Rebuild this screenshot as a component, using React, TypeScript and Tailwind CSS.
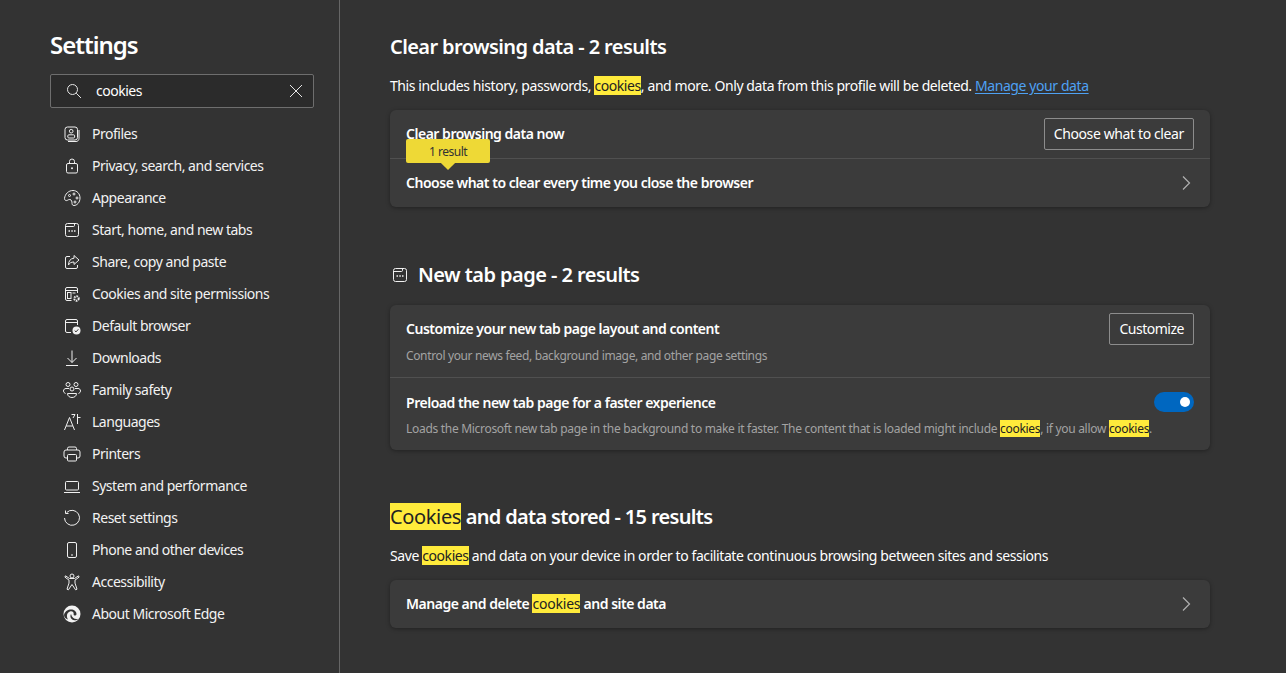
import React from "react";

const ic = { width: 20, height: 20, viewBox: "0 0 20 20", fill: "none", stroke: "#f0f0f0", strokeWidth: 1 } as const;

const TabIcon = () => (
  <svg {...ic}>
    <rect x="3.500" y="3.500" width="13" height="13" rx="2" />
    <path d="M3.500 6.500h8c.6 0 1-.4 1-1v-2" />
    <path d="M6.500 11h1.500M9.300 11h1.500M12 11h1.500" strokeWidth="1.500" />
  </svg>
);

const navItems: { label: string; icon: React.ReactNode }[] = [
  {
    label: "Profiles",
    icon: (
      <svg {...ic}>
        <rect x="3" y="3" width="12.500" height="13" rx="2.500" />
        <circle cx="9.200" cy="7.200" r="1.800" />
        <path d="M5.800 13v-1.200c0-.6.5-1 1-1h4.800c.6 0 1 .4 1 1V13c0 .5-.4 1-1 1H6.800c-.5 0-1-.5-1-1z" />
        <path d="M17 6v8.500c0 1.600-1.200 3-3 3H6" />
      </svg>
    ),
  },
  {
    label: "Privacy, search, and services",
    icon: (
      <svg {...ic}>
        <rect x="4.500" y="7.500" width="11" height="9.500" rx="1.500" />
        <path d="M7.500 7.500V5.500a2.500 2.500 0 0 1 5 0v2" />
        <circle cx="10" cy="12.200" r="1" fill="#f0f0f0" stroke="none" />
      </svg>
    ),
  },
  {
    label: "Appearance",
    icon: (
      <svg {...ic}>
        <path d="M2.500 10.500C3 6 6.500 2.500 11 2.500c4 0 7 3.200 7 7.500 0 4.300-3 7.500-6 7.500-1.500 0-2-1-2-2.200 0-1.300-.2-3.800-2.200-3.800-2 0-2.300 1.300-3.500 1.100-1-.1-1.900-.9-1.800-2.100z" />
        <circle cx="7.500" cy="7.500" r="1" />
        <circle cx="12" cy="6" r="1" />
        <circle cx="15" cy="10" r="1" />
        <circle cx="13" cy="14" r="1" />
      </svg>
    ),
  },
  { label: "Start, home, and new tabs", icon: <TabIcon /> },
  {
    label: "Share, copy and paste",
    icon: (
      <svg {...ic}>
        <path d="M8 4.500H5A1.500 1.500 0 0 0 3.500 6v9A1.500 1.500 0 0 0 5 16.500h9a1.500 1.500 0 0 0 1.500-1.500v-2" />
        <path d="M12 3.500l5 4.500-5 4.500V10c-3 0-4.500 1-5.500 3 0-4 2-6.500 5.500-6.800z" />
      </svg>
    ),
  },
  {
    label: "Cookies and site permissions",
    icon: (
      <svg {...ic}>
        <path d="M9.500 16.500H5A1.500 1.500 0 0 1 3.500 15V5A1.500 1.500 0 0 1 5 3.500h9A1.500 1.500 0 0 1 15.500 5v4" />
        <path d="M3.500 6.500h12" />
        <rect x="5.500" y="8.500" width="3.500" height="6" />
        <path d="M10.500 9h3" />
        <circle cx="14.500" cy="14.500" r="2.200" strokeWidth="2" strokeDasharray="1.500 0.800" />
      </svg>
    ),
  },
  {
    label: "Default browser",
    icon: (
      <svg {...ic}>
        <path d="M9 16.500H5A1.500 1.500 0 0 1 3.500 15V5A1.500 1.500 0 0 1 5 3.500h9A1.500 1.500 0 0 1 15.500 5v4" />
        <path d="M3.500 6.500h12" />
        <circle cx="14.500" cy="14.500" r="4" fill="#f0f0f0" stroke="none" />
        <path d="M12.700 14.600l1.300 1.300 2.300-2.600" stroke="#333333" />
      </svg>
    ),
  },
  {
    label: "Downloads",
    icon: (
      <svg {...ic}>
        <path d="M10 2.500v12M5.500 10l4.500 4.500 4.500-4.500" />
        <path d="M4 17.500h12" />
      </svg>
    ),
  },
  {
    label: "Family safety",
    icon: (
      <svg {...ic}>
        <circle cx="6" cy="4.500" r="2" />
        <circle cx="14" cy="4.500" r="2" />
        <circle cx="10" cy="9" r="2" />
        <path d="M1.500 11c0-1.500 1-2.500 2.500-2.500h3M18.500 11c0-1.500-1-2.500-2.500-2.500h-3" />
        <path d="M1.500 11c0 1.300 1 2 2 2.500M18.500 11c0 1.300-1 2-2 2.500" />
        <path d="M5.500 13.500h9c0 2.500-2 4-4.500 4s-4.500-1.500-4.500-4z" />
      </svg>
    ),
  },
  {
    label: "Languages",
    icon: (
      <svg {...ic}>
        <path d="M2.500 18L7.500 5.500 12.500 18M4.200 14h6.600" />
        <path d="M9.500 2.500h3.500l-2 3.500M15.500 2v10M15.500 5.500h3" />
      </svg>
    ),
  },
  {
    label: "Printers",
    icon: (
      <svg {...ic}>
        <path d="M5.500 6V4.500a1.500 1.500 0 0 1 1.500-1.500h6a1.500 1.500 0 0 1 1.500 1.500V6" />
        <path d="M5.500 14H4a2 2 0 0 1-2-2V8a2 2 0 0 1 2-2h12a2 2 0 0 1 2 2v4a2 2 0 0 1-2 2h-1.500" />
        <rect x="5.500" y="10.500" width="9" height="6.500" rx="1" />
      </svg>
    ),
  },
  {
    label: "System and performance",
    icon: (
      <svg {...ic}>
        <rect x="3.500" y="5.500" width="13" height="8.500" rx="1" />
        <path d="M2 16.500h16" />
      </svg>
    ),
  },
  {
    label: "Reset settings",
    icon: (
      <svg {...ic}>
        <path d="M4.700 4.500A7.500 7.500 0 1 1 2.500 10" />
        <path d="M3.500 2.500v3h3" />
      </svg>
    ),
  },
  {
    label: "Phone and other devices",
    icon: (
      <svg {...ic}>
        <rect x="5.500" y="2.500" width="9" height="15" rx="1.500" />
        <path d="M9 15h2" />
      </svg>
    ),
  },
  {
    label: "Accessibility",
    icon: (
      <svg {...ic}>
        <circle cx="10" cy="4" r="2" />
        <path d="M3.500 3.800l4 2.700h5l4-2.700.6 1.300-4.100 3v3l2 6.100-1.400.6L10 12.500l-3.600 5.300-1.400-.6 2-6.100v-3L2.900 5.100z" />
      </svg>
    ),
  },
  {
    label: "About Microsoft Edge",
    icon: (
      <svg width="20" height="20" viewBox="0 0 20 20">
        <circle cx="10" cy="10" r="8.500" fill="#f2f2f2" />
        <path d="M2 11c1-4 4-5.500 7-5.500s5.500 2 5.500 4.500c0 1-.8 1.500-2 1.500-.8 0-1-.5-.8-1.200C12 8 10 6.800 8 7.500 5 8.500 4 12 6 15.500 3.500 14.800 2 13 2 11z" fill="#333333" />
        <path d="M9 10c-1.500 2.500 0 6 3.500 6.300 1.500.1 3-.5 4-1.500-3.500 1-6.500-.5-7.500-4.800z" fill="#333333" />
      </svg>
    ),
  },
];

const Hit = ({ children, className = "" }: { children: React.ReactNode; className?: string }) => (
  <span className={`bg-[#ffeb3b] text-[#222222] ${className}`}>{children}</span>
);

const Chevron = () => (
  <svg width="16" height="16" viewBox="0 0 16 16" fill="none" stroke="#b0b0b0" strokeWidth="1.200">
    <path d="M5 1.500L11.500 8 5 14.500" />
  </svg>
);

const OutlineButton = ({ children, className = "" }: { children: React.ReactNode; className?: string }) => (
  <button className={`h-8 px-[9px] pb-[2px] border border-[#8c8c8c] rounded-[2px] text-[14px] text-white ${className}`}>
    {children}
  </button>
);

const Card = ({ children, className = "" }: { children: React.ReactNode; className?: string }) => (
  <div className={`w-[820px] bg-[#3b3b3b] rounded-[6px] shadow-[0_1px_4px_rgba(0,0,0,0.35)] ${className}`}>{children}</div>
);

export default function App() {
  return (
    <div className="flex h-[673px] overflow-hidden bg-[#333333] text-white text-[14px] font-['Noto_Sans',sans-serif] tracking-[-0.48px]">
      {/* Sidebar */}
      <aside className="w-[340px] shrink-0 border-r border-[#666666] pl-[50px] pt-[28px]">
        <h1 className="text-[24px] leading-[34px] font-semibold tracking-[-1px]">Settings</h1>
        <div className="mt-[12px] w-[264px] h-[34px] flex items-center border border-[#6e6e6e] rounded-[2px] bg-[#2b2b2b] pl-[15px] pr-[10px]">
          <svg width="16" height="16" viewBox="0 0 16 16" fill="none" stroke="#e6e6e6" strokeWidth="1">
            <circle cx="6.500" cy="6.500" r="5" />
            <path d="M10.200 10.200L15 15" />
          </svg>
          <span className="ml-[14px] flex-1 pb-[2px]">cookies</span>
          <svg width="14" height="14" viewBox="0 0 14 14" fill="none" stroke="#e6e6e6" strokeWidth="1">
            <path d="M1 1l12 12M13 1L1 13" />
          </svg>
        </div>
        <nav className="mt-[10px]">
          {navItems.map((item) => (
            <div key={item.label} className="h-8 flex items-center pl-[12px] text-[#f2f2f2]">
              <span className="w-[20px] h-[20px] shrink-0">{item.icon}</span>
              <span className="ml-[10px] pb-[2px]">{item.label}</span>
            </div>
          ))}
        </nav>
      </aside>

      {/* Content */}
      <main className="flex-1 pl-[50px] pt-[33px]">
        <h2 className="text-[20px] leading-[28px] font-semibold tracking-[-0.6px]">Clear browsing data - 2 results</h2>
        <p className="mt-[15px] leading-[20px] tracking-[-0.41px]">
          This includes history, passwords, <Hit>cookies</Hit>, and more. Only data from this profile will be deleted.{" "}
          <span className="text-[#4ea1f3] underline underline-offset-2">Manage your data</span>
        </p>
        <Card className="mt-[14px]">
          <div className="relative h-[49px] flex items-center justify-between pl-4 pr-4 border-b border-[#505050]">
            <span className="font-semibold pb-[2px]">Clear browsing data now</span>
            <OutlineButton className="tracking-[-0.38px]">Choose what to clear</OutlineButton>
            <div className="absolute left-4 top-[29px] w-[84px] h-6 pt-[2px] bg-[#eed936] rounded-[2px] flex items-center justify-center text-[12px] text-[#333333] z-10">
              1 result
              <span className="absolute left-[37px] bottom-[-5px] w-[10px] h-[10px] bg-[#eed936] rotate-45 -z-10" />
            </div>
          </div>
          <div className="h-[48px] flex items-center justify-between pl-4 pr-4">
            <span className="font-semibold pb-[2px]">Choose what to clear every time you close the browser</span>
            <Chevron />
          </div>
        </Card>

        <div className="mt-[54px] flex items-center h-[28px]">
          <TabIcon />
          <h2 className="ml-2 text-[20px] font-semibold tracking-[-0.55px]">New tab page - 2 results</h2>
        </div>
        <Card className="mt-[16px]">
          <div className="h-[73px] flex justify-between pl-4 pr-4 pt-[8px] border-b border-[#505050]">
            <div>
              <div className="font-semibold leading-[20px] mt-[6px]">Customize your new tab page layout and content</div>
              <div className="mt-[9px] text-[12px] leading-[16px] text-[#a3a3a3] tracking-[-0.36px]">
                Control your news feed, background image, and other page settings
              </div>
            </div>
            <OutlineButton>Customize</OutlineButton>
          </div>
          <div className="relative h-[72px] pl-4 pr-4 pt-[15px]">
            <div className="font-semibold leading-[20px]">Preload the new tab page for a faster experience</div>
            <div className="mt-[8px] text-[12px] leading-[16px] text-[#a3a3a3] tracking-[-0.3px]">
              Loads the Microsoft new tab page in the background to make it faster. The content that is loaded might include{" "}
              <Hit>cookies</Hit>, if you allow <Hit>cookies</Hit>.
            </div>
            <div className="absolute right-4 top-[14px] w-10 h-5 rounded-full bg-[#0067c0] flex items-center justify-end pr-[4px]">
              <span className="w-[10px] h-[10px] rounded-full bg-white" />
            </div>
          </div>
        </Card>

        <h2 className="mt-[53px] text-[20px] leading-[28px] font-semibold tracking-[-0.66px]">
          <Hit className="font-normal tracking-[-0.35px]">Cookies</Hit> and data stored - 15 results
        </h2>
        <p className="mt-[15px] leading-[20px] tracking-[-0.41px]">
          Save <Hit>cookies</Hit> and data on your device in order to facilitate continuous browsing between sites and sessions
        </p>
        <Card className="mt-[14px] h-[48px] flex items-center justify-between pl-4 pr-4">
          <span className="font-semibold pb-[2px]">
            Manage and delete <Hit className="font-normal tracking-[-0.2px]">cookies</Hit> and site data
          </span>
          <Chevron />
        </Card>
      </main>
    </div>
  );
}
